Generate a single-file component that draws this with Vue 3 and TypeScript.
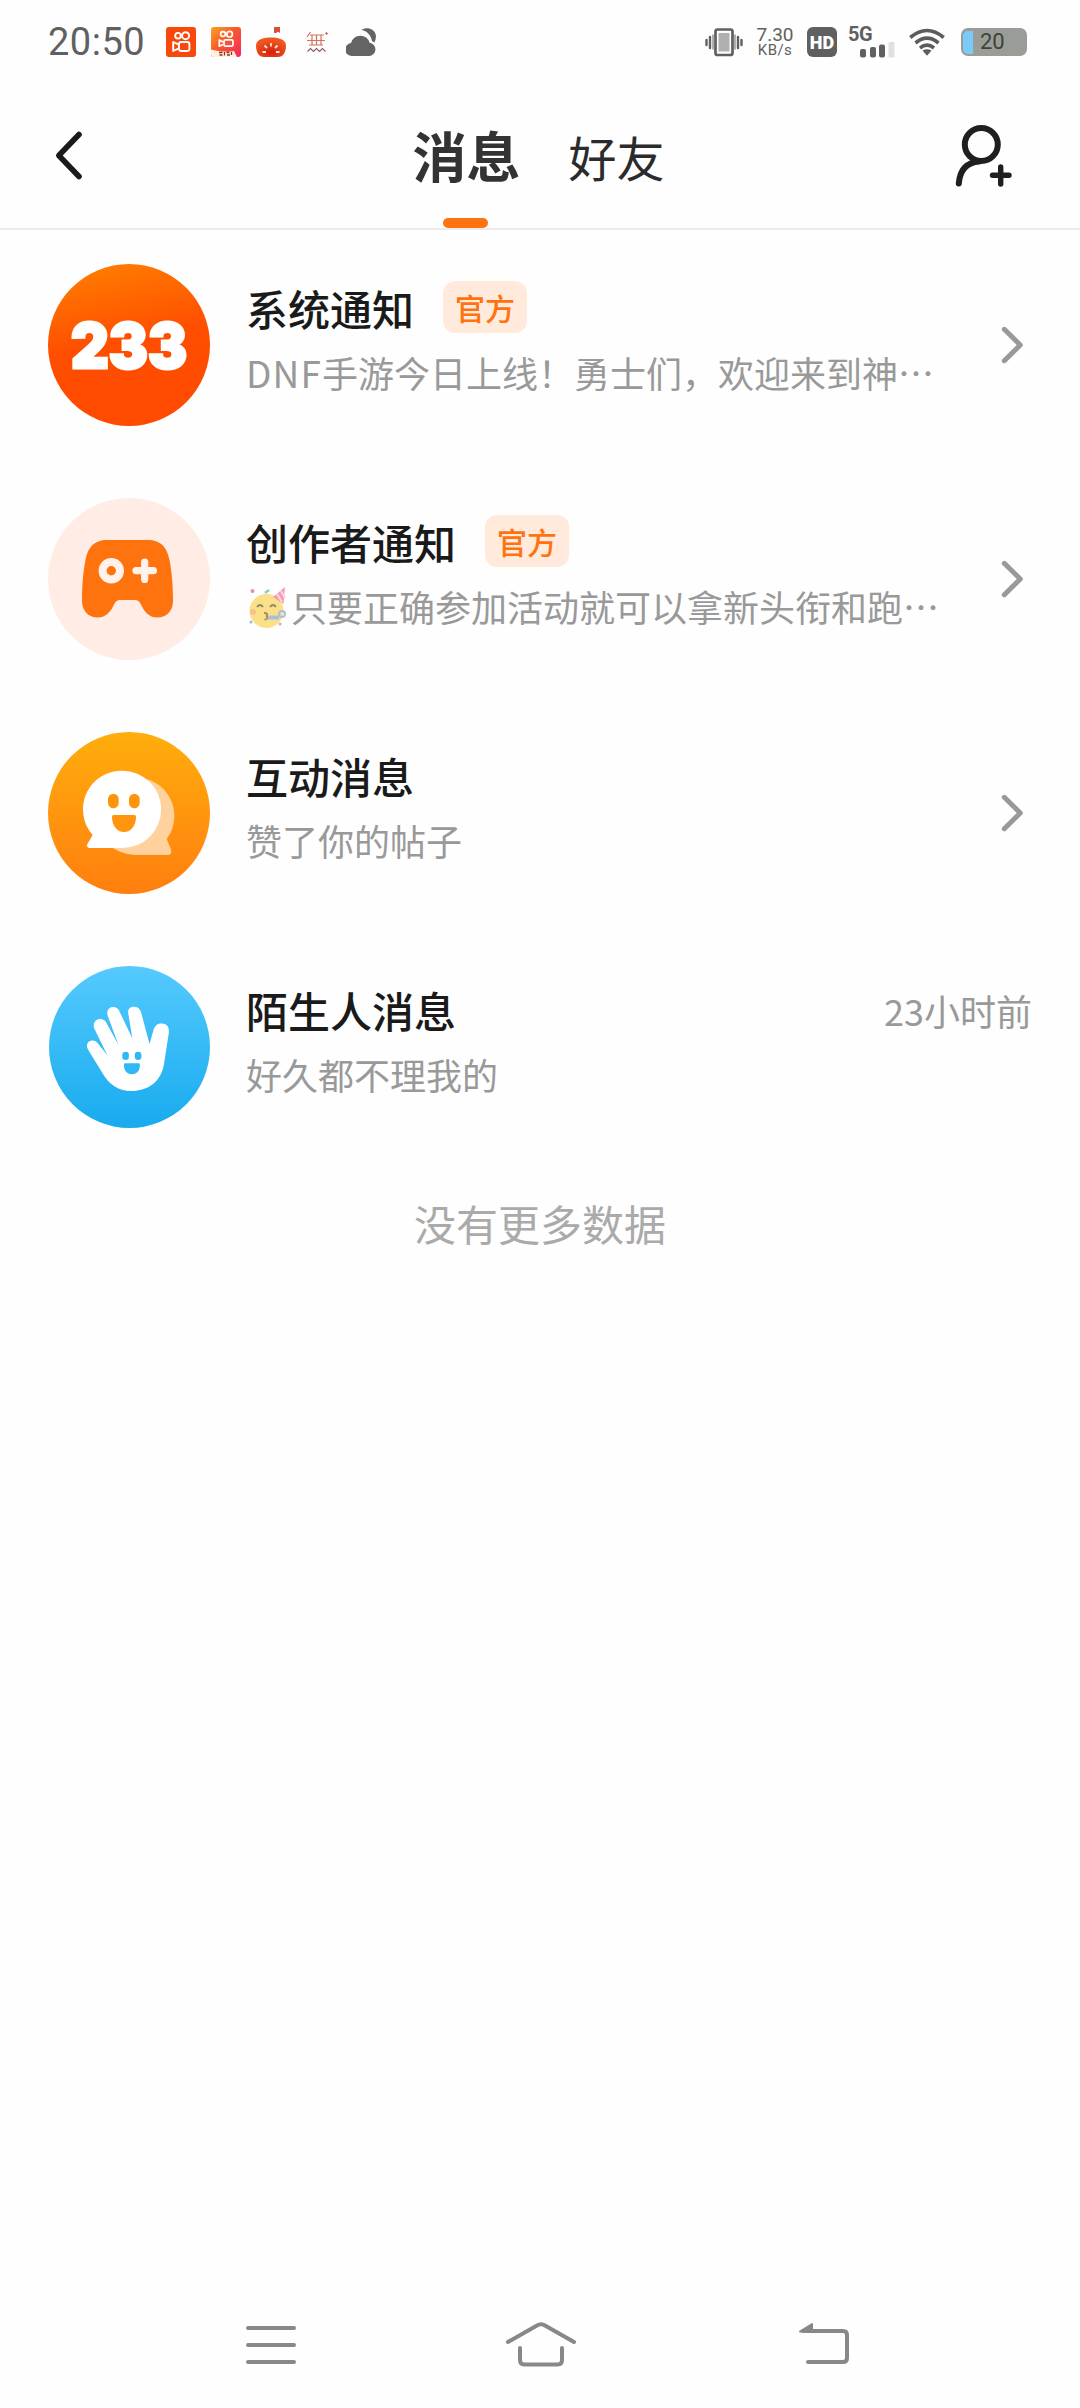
<script setup lang="ts">
type AvatarKind = 'system' | 'creator' | 'interact' | 'stranger'

interface Conversation {
  kind: AvatarKind
  title: string
  official?: boolean
  emoji?: boolean
  latin?: string
  summary: string
  time?: string
}

const conversations: Conversation[] = [
  { kind: 'system', title: '系统通知', official: true, latin: 'DNF', summary: '手游今日上线\uff01勇士们\uff0c欢迎来到神…' },
  { kind: 'creator', title: '创作者通知', official: true, emoji: true, summary: '只要正确参加活动就可以拿新头衔和跑…' },
  { kind: 'interact', title: '互动消息', summary: '赞了你的帖子' },
  { kind: 'stranger', title: '陌生人消息', summary: '好久都不理我的', time: '23小时前' },
]
</script>

<template>
  <div class="screen">
    <div class="status">
      <span class="clock">20:50</span>
      <svg class="app-icon" width="30" height="30" viewBox="0 0 30 30">
        <rect width="30" height="30" rx="3" fill="#f8480c" />
        <g fill="none" stroke="#fff" stroke-width="1.9" stroke-linejoin="round">
          <circle cx="12" cy="8.7" r="2.8" />
          <circle cx="19.6" cy="8.7" r="3.5" />
          <rect x="13" y="15" width="10.4" height="9" rx="2.2" />
          <path d="M12.3 17.3 7.2 15v9l5.1-2.3" />
        </g>
      </svg>
      <svg class="app-icon" width="30" height="30" viewBox="0 0 30 30">
        <defs>
          <linearGradient id="lite" x1="0" y1="0" x2="1" y2="1">
            <stop offset="0" stop-color="#fba321" />
            <stop offset=".45" stop-color="#f65a2c" />
            <stop offset="1" stop-color="#f5265f" />
          </linearGradient>
        </defs>
        <rect width="30" height="30" rx="3" fill="url(#lite)" />
        <path d="M0 22.5Q15 26 23 24l3 6H3q-3 0-3-3z" fill="#fff0dc" />
        <g fill="none" stroke="#fff" stroke-width="1.7" stroke-linejoin="round">
          <circle cx="12" cy="7" r="2.4" />
          <circle cx="18.6" cy="7.2" r="2.8" />
          <rect x="13" y="12.8" width="9" height="6.4" rx="1.5" />
          <path d="M12 15 8.3 13v6.2l3.7-1.8" />
        </g>
        <path d="M8 25.5h3.5M8.5 28h3M13.5 25v3.5M15.5 25.5h3M16 28h3M20.5 25v3" stroke="#8c3326" stroke-width="1.3" />
      </svg>
      <svg class="app-icon" width="30" height="30" viewBox="0 0 30 30">
        <defs>
          <radialGradient id="tomato" cx=".5" cy=".75" r=".6">
            <stop offset="0" stop-color="#d5200d" />
            <stop offset="1" stop-color="#ee5620" />
          </radialGradient>
        </defs>
        <path d="M18 0h6v6l-2.200-1.200L20 6h-2z" fill="#d85036" />
        <path d="M0 18.5C0 12 9 10.500 15 10.500s15 1.500 15 8c0 7-3 11.500-8 11.500H8C3 30 0 25.500 0 18.500z" fill="url(#tomato)" />
        <path d="M6.500 25h3.500M8.500 18.500l2.500 2.500M15 16v3.500M21.500 18.500 19 21M20 25h3.500" stroke="#ffe4dc" stroke-width="1.800" />
      </svg>
      <svg class="app-icon" width="30" height="30" viewBox="0 0 30 30" fill="none">
        <path d="M9.500 5 6 10M9 8h14M6 13.500h18M11 8v10M15.500 7.500v11M20 8v10M8 18h14M24 6.500h3M25.500 5v3" stroke="#d4705c" stroke-width="1.200" />
        <path d="m6.500 24.500 3-3 3 3 3-3 3 3 3-3 3 3" stroke="#8b5a6e" stroke-width="1.100" />
      </svg>
      <svg class="app-icon" width="30" height="30" viewBox="0 0 30 30" fill="#646464">
        <path d="M6.500 29a6.500 6.500 0 0 1-1.500-13 9.600 9.600 0 0 1 18.600-.3A6.700 6.700 0 0 1 23.500 29z" />
        <path d="M15.500 3C20-.5 28.500 1 29.800 8q.6 4-1.600 7.500l-2.200-1.500C25 8 21 4 15.500 3z" />
      </svg>

      <div class="status-right">
        <svg width="38" height="30" viewBox="0 0 38 30" fill="none" stroke="#606060">
          <path d="M1.500 13v5M5 10v11M33 10v11M36.500 13v5" stroke-width="2.400" stroke-linecap="round" />
          <path d="M8 7.500v15M30 7.500v15" stroke-width="1" />
          <rect x="10.500" y="2.500" width="17" height="25.500" rx="2" stroke-width="2.700" />
          <rect x="13.500" y="6" width="11" height="18.500" fill="#b0b0b0" stroke="none" />
        </svg>
        <div class="speed"><span>7.30</span><span class="unit">KB/s</span></div>
        <div class="hd">HD</div>
        <div class="signal">
          <span class="net">5G</span>
          <svg width="35" height="16" viewBox="0 0 35 16" fill="#606060">
            <rect x="0" y="7" width="6" height="8.500" rx="2" />
            <rect x="10" y="5" width="6" height="10.500" rx="2" />
            <rect x="19" y="2.500" width="6" height="13" rx="2" />
            <rect x="28.500" y="0" width="6" height="15.500" rx="1" fill="#e0e0e0" />
          </svg>
        </div>
        <svg class="wifi" width="36" height="30" viewBox="0 0 36 30" fill="none" stroke="#5c5c5c" stroke-width="3.600">
          <path d="M1.300 10.500Q18-3.500 34.700 10.500" />
          <path d="M6.500 16q11.500-9.700 23 0" />
          <path d="M11 21q7-5.800 14 0" />
          <path d="M13.500 23.500q4.500-2.500 9 0L18 28.800z" fill="#5c5c5c" stroke="none" />
        </svg>
        <div class="battery"><i></i><span>20</span></div>
      </div>
    </div>

    <header class="header">
      <svg class="back" width="32" height="52" viewBox="0 0 32 52" fill="none" stroke="#1a1a1a" stroke-width="5.600" stroke-linecap="round" stroke-linejoin="round">
        <path d="M26 5.500 5.800 26.500 26 47.500" />
      </svg>
      <nav class="tabs">
        <div class="tab active">消息</div>
        <div class="tab">好友</div>
      </nav>
      <svg class="add" width="60" height="66" viewBox="0 0 60 66" fill="none" stroke="#1f1f1f" stroke-linecap="round">
        <circle cx="29.300" cy="19.500" r="16.500" stroke-width="6" />
        <path d="M27 36.500Q8.500 38 6.800 58.500" stroke-width="6" />
        <path d="M40.500 50.300h16.500M48.700 42v17" stroke-width="5.400" />
      </svg>
    </header>

    <main class="list">
      <section v-for="item in conversations" :key="item.kind" class="row">
        <svg v-if="item.kind === 'system'" class="avatar" viewBox="0 0 162 162">
          <defs>
            <linearGradient id="sys" x1=".25" y1="0" x2=".45" y2="1">
              <stop offset="0" stop-color="#ff7d00" />
              <stop offset=".5" stop-color="#ff4e00" />
              <stop offset="1" stop-color="#ff4a00" />
            </linearGradient>
          </defs>
          <circle cx="81" cy="81" r="81" fill="url(#sys)" />
          <text class="logo" x="23" y="103.500" textLength="116" lengthAdjust="spacingAndGlyphs">233</text>
        </svg>
        <svg v-else-if="item.kind === 'creator'" class="avatar" viewBox="0 0 162 162">
          <circle cx="81" cy="81" r="81" fill="#ffede5" />
          <path d="M60 42h39c15 0 20 8 22.500 20 2.500 13 3.500 25 3.500 41 0 10-6.500 16.500-15.500 16.500-8 0-12.500-5-15.500-11-2-4.500-4-6.500-7-6.500H72c-3 0-5 2-7 6.500-3 6-7.500 11-15.500 11-9 0-15.500-6.500-15.500-16.500 0-16 1-28 3.500-41C40 50 45 42 60 42z" fill="#ff730e" />
          <circle cx="63.300" cy="72.700" r="8.700" fill="none" stroke="#fff2ea" stroke-width="8" />
          <path d="M88 72.700h17.400M96.700 64v17.400" stroke="#fff2ea" stroke-width="7.200" stroke-linecap="round" />
        </svg>
        <svg v-else-if="item.kind === 'interact'" class="avatar" viewBox="0 0 162 162">
          <defs>
            <linearGradient id="chat" x1="0" y1="0" x2="0" y2="1">
              <stop offset="0" stop-color="#ffae0c" />
              <stop offset="1" stop-color="#ff7e0f" />
            </linearGradient>
          </defs>
          <circle cx="81" cy="81" r="81" fill="url(#chat)" />
          <path d="M87.500 45.500a38.500 38.500 0 0 1 31.200 61.500l3.500 8.500c1.800 4 1.300 7.500-2.200 7.500H87.500a38.500 38.500 0 0 1 0-77.500z" fill="#ffd19c" />
          <path d="M74.500 38.700a38.650 38.650 0 0 1 0 77.300H42c-3 0-3.800-2.500-2-5l4.700-8A38.650 38.650 0 0 1 74.500 38.700z" fill="#fff" />
          <g fill="#ff950d">
            <rect x="60" y="61.700" width="10.700" height="14.600" rx="5.350" />
            <rect x="81" y="61.700" width="10.700" height="14.600" rx="5.350" />
            <path d="M65.500 83h21q1.500 0 1.500 1.500C88 94 83 100 76 100s-12-6-12-15.500Q64 83 65.500 83z" />
          </g>
        </svg>
        <svg v-else class="avatar" viewBox="0 0 162 162">
          <defs>
            <linearGradient id="wave" x1="0" y1="0" x2="0" y2="1">
              <stop offset="0" stop-color="#55cafe" />
              <stop offset="1" stop-color="#18abee" />
            </linearGradient>
          </defs>
          <ellipse cx="81.500" cy="81" rx="80.500" ry="81" fill="url(#wave)" />
          <path d="M40 83.500C37 77.500 41 74.500 45 74.500q3 0 5 3l9.500 12L46.500 63C44 57 48 53 52 53q4.500 0 6.500 4l12 22L59.800 50C58 45 61 41 65 41q5 0 6.500 4.500L84.300 72.300 80.500 49C79 43 82 40.700 86 40.700q5 0 7 5.300l8.500 32 4-14c1.500-5.500 5.500-7 9-6.500 6.500 1 6.500 5.500 6.300 9.500L116 98c-3 18-16 27-33 27-13 0-22-7-28-17z" fill="#fff" />
          <g fill="#30b8f6">
            <rect x="74.300" y="85.700" width="6.600" height="8.400" rx="3.300" />
            <rect x="86.800" y="85.700" width="6.600" height="8.400" rx="3.300" />
            <path d="M77.500 97.300h13q1.400 0 1.400 1.400c0 6-3 9.500-8 9.500s-8-3.500-8-9.500q0-1.400 1.600-1.400z" />
          </g>
        </svg>

        <div class="body">
          <div class="title-line">
            <h2 class="title">{{ item.title }}</h2>
            <span v-if="item.official" class="badge">官方</span>
          </div>
          <p class="desc">
            <svg v-if="item.emoji" class="emoji" width="44" height="44" viewBox="0 0 44 44" fill="none">
              <circle cx="19.500" cy="26" r="17" fill="#fbe08a" />
              <path d="M26 12 38 2l-1.500 17z" fill="#f59ab4" />
              <path d="m30 9 5 8M34 6l4 7" stroke="#fbd9e2" stroke-width="2" />
              <path d="M10 22q3-4 6 0M23 22q3-4 6 0" stroke="#97866a" stroke-width="2" />
              <path d="M17 28q5 0 2.500 3 3 3-2 3.500" stroke="#a8895e" stroke-width="1.800" />
              <path d="M21 32.500h11" stroke="#a8bfe0" stroke-width="4" />
              <circle cx="35" cy="29" r="3" stroke="#a8bfe0" stroke-width="2" />
              <path d="m18 8 4-3" stroke="#82d3b5" stroke-width="2.500" />
              <circle cx="5.500" cy="6" r="2" fill="#e88daa" />
              <circle cx="4" cy="37" r="1.500" fill="#9bb7df" />
              <circle cx="33" cy="39" r="1.500" fill="#e5a4b8" />
              <circle cx="6" cy="27" r="3" fill="#f5c08b" />
            </svg>
            <span v-if="item.latin" class="latin">{{ item.latin }}</span>{{ item.summary }}
          </p>
        </div>

        <time v-if="item.time" class="time">{{ item.time }}</time>
        <svg v-else class="chevron" width="24" height="40" viewBox="0 0 24 40" fill="none" stroke="#999" stroke-width="5" stroke-linecap="round" stroke-linejoin="round">
          <path d="m4.300 4.300 16 15.700-16 15.700" />
        </svg>
      </section>
      <p class="end">没有更多数据</p>
    </main>

    <footer class="navbar">
      <svg width="50" height="50" viewBox="0 0 50 50" stroke="#888" stroke-width="4" stroke-linecap="round">
        <path d="M2 8h46M2 25h46M2 42h46" />
      </svg>
      <svg class="home" width="72" height="50" viewBox="0 0 72 50" fill="none" stroke="#888" stroke-width="4" stroke-linecap="round">
        <path d="M3 22 32 5.500q4-2.500 8 0L69 22" />
        <path d="M15 28v12q0 4.500 4.500 4.500h33Q57 44.500 57 40V28" />
      </svg>
      <svg class="return" width="52" height="50" viewBox="0 0 52 50" fill="none" stroke="#888" stroke-width="4" stroke-linecap="round">
        <path d="M5 11h40q4 0 4 4v23q0 4-4 4H10" />
        <path d="M2 11.500 14 4v7.500z" fill="#888" stroke-width="2" stroke-linejoin="round" />
      </svg>
    </footer>
  </div>
</template>

<style>
body {
  background: #fefefe;
}
</style>

<style scoped>
.screen {
  display: flex;
  flex-direction: column;
  width: 1080px;
  height: 2408px;
  overflow: hidden;
  background: #fefefe;
  font-family: 'Noto Sans CJK SC', sans-serif;
}
.status {
  display: flex;
  align-items: center;
  box-sizing: border-box;
  height: 84px;
  padding: 0 53px 0 48px;
  color: #606060;
  font-family: Roboto, 'Noto Sans CJK SC', sans-serif;
}
.clock {
  width: 118px;
  font-size: 38px;
  line-height: 44px;
  letter-spacing: 0.5px;
}
.app-icon {
  margin-right: 15px;
}
.status-right {
  display: flex;
  align-items: center;
  margin-left: auto;
}
.speed {
  display: flex;
  flex-direction: column;
  align-items: center;
  width: 38px;
  margin: 0 13px;
  font-size: 19px;
  line-height: 17px;
  white-space: nowrap;
}
.speed .unit {
  font-size: 15px;
  line-height: 15px;
  letter-spacing: 0.4px;
}
.hd {
  width: 30px;
  height: 30px;
  border-radius: 6px;
  background: #606060;
  color: #fff;
  font-size: 18px;
  font-weight: 900;
  line-height: 31px;
  text-align: center;
}
.signal {
  display: flex;
  flex-direction: column;
  width: 47px;
  height: 31px;
  margin-left: 11px;
}
.net {
  height: 15px;
  font-size: 20px;
  font-weight: 700;
  line-height: 15px;
  letter-spacing: -0.5px;
}
.signal svg {
  align-self: flex-end;
}
.wifi {
  margin-left: 14px;
}
.battery {
  display: flex;
  align-items: center;
  box-sizing: border-box;
  width: 66px;
  height: 28px;
  margin-left: 16px;
  padding: 2px;
  border-radius: 7px;
  background: #9a9d97;
  color: #3e423c;
  font-size: 22px;
}
.battery i {
  width: 10px;
  height: 23px;
  border-radius: 5px 0 0 5px;
  background: #7accf8;
}
.battery span {
  margin-left: 7px;
  line-height: 26px;
}
.header {
  display: flex;
  align-items: flex-start;
  justify-content: space-between;
  box-sizing: border-box;
  height: 146px;
  padding: 0 68px 0 53px;
  border-bottom: 2px solid #ececec;
}
.back {
  margin-top: 45px;
}
.add {
  margin-top: 41px;
}
.tabs {
  display: flex;
  align-items: stretch;
  height: 144px;
  margin-left: 40px;
}
.tab {
  color: #2b2b2b;
  font-size: 48px;
  line-height: 144px;
}
.tab.active {
  position: relative;
  margin-right: 48px;
  color: #333;
  font-size: 54px;
  font-weight: 700;
  line-height: 142px;
}
.tab.active::after {
  content: '';
  position: absolute;
  bottom: 0;
  left: 50%;
  width: 45px;
  height: 10px;
  margin-left: -23px;
  border-radius: 5px;
  background: #ff7210;
}
.row {
  display: flex;
  align-items: flex-start;
  padding: 34px 48px 38px;
  height: 162px;
}
.avatar {
  flex: none;
  width: 162px;
  height: 162px;
}
.logo {
  fill: #fff;
  stroke: #fff;
  stroke-width: 3px;
  font-family: Inter, 'Noto Sans', sans-serif;
  font-size: 62px;
  font-weight: 900;
}
.body {
  flex: 1;
  min-width: 0;
  padding: 17px 0 0 36px;
}
.title-line {
  display: flex;
  align-items: center;
  height: 52px;
}
.title {
  margin: 2px 0 0;
  color: #1a1a1a;
  font-size: 42px;
  font-weight: 500;
  line-height: 52px;
}
.badge {
  box-sizing: border-box;
  width: 84px;
  height: 52px;
  margin-left: 29px;
  border-radius: 12px;
  background: #ffeadb;
  color: #ff7210;
  font-size: 30px;
  font-weight: 500;
  line-height: 52px;
  text-align: center;
}
.desc {
  display: flex;
  align-items: center;
  height: 44px;
  margin: 17px 0 0;
  color: #999;
  font-size: 36px;
  line-height: 44px;
  white-space: nowrap;
}
.emoji {
  margin: 2px 0 0 1px;
}
.latin {
  font-size: 37px;
  letter-spacing: 1.1px;
}
.time {
  margin-top: 22px;
  color: #999;
  font-size: 36px;
  line-height: 44px;
}
.chevron {
  align-self: center;
  margin-right: 8px;
}
.end {
  margin: 31px 0 0;
  color: #aaa;
  font-size: 42px;
  line-height: 52px;
  text-align: center;
}
.navbar {
  display: flex;
  align-items: flex-start;
  margin-top: auto;
  height: 88px;
  padding-left: 246px;
}
.home {
  margin-left: 209px;
}
.return {
  margin-left: 221px;
}
</style>
